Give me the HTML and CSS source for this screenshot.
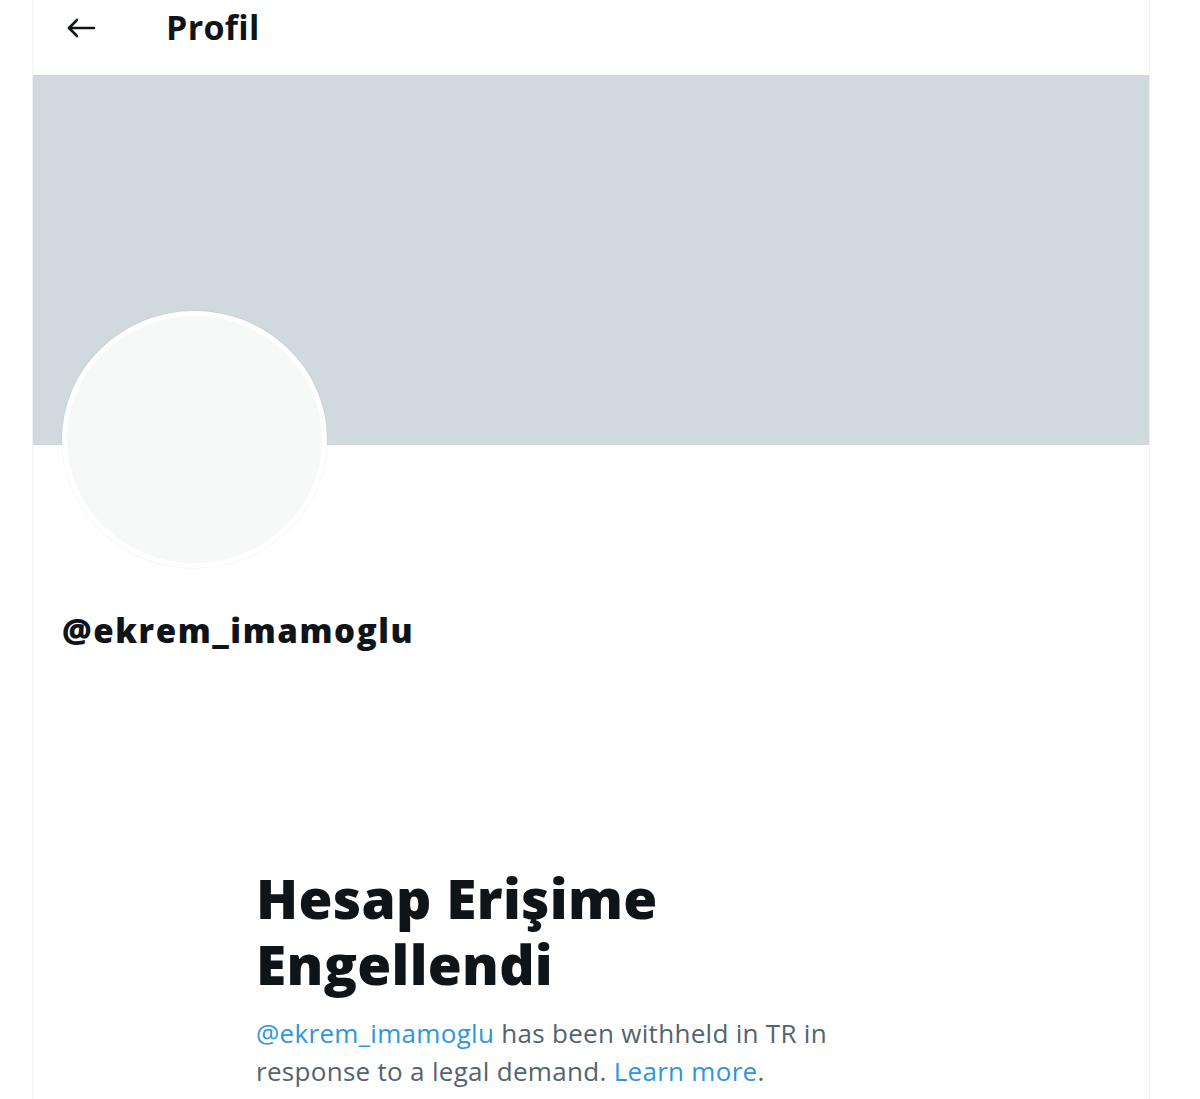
FILE: index.html
```
<!DOCTYPE html>
<html lang="tr">
<head>
    <meta charset="UTF-8">
    <meta name="viewport" content="width=device-width, initial-scale=1.0">
    <title>Profil</title>
    <link rel="stylesheet" href="styles.css">
</head>
<body>
    <div class="column">
        <header class="topbar">
            <a class="back">
                <svg width="30" height="20" viewBox="0 0 30 20">
                    <path d="M28 10H3M11 2L3 10l8 8" fill="none" stroke="#0f1419" stroke-width="2.6" stroke-linecap="round" stroke-linejoin="round"/>
                </svg>
            </a>
            <h1 class="title">Profil</h1>
        </header>
        <div class="banner"></div>
        <div class="avatar"></div>
        <div class="handle">@ekrem_imamoglu</div>
        <section class="withheld">
            <h2 class="withheld-title">Hesap Erişime Engellendi</h2>
            <p class="withheld-text"><a class="link">@ekrem_imamoglu</a> has been withheld in TR in response to a legal demand. <a class="link">Learn more</a>.</p>
        </section>
    </div>
</body>
</html>
```

FILE: styles.css
```
body {
    margin: 0;
    background: #fff;
    font-family: "Open Sans", "Noto Sans", sans-serif;
    color: #0f1419;
}
.column {
    margin-left: 32px;
    width: 1116px;
    min-height: 100vh;
    border-left: 1px solid #eff3f4;
    border-right: 1px solid #eff3f4;
}
.topbar {
    height: 75px;
    display: flex;
    align-items: center;
    padding-left: 33px;
}
.back {
    display: flex;
    width: 30px;
    height: 20px;
    margin-right: 70px;
    margin-top: -20px;
}
.title {
    margin: 0;
    font-size: 34px;
    font-weight: 700;
    line-height: 40px;
    margin-top: -22px;
    letter-spacing: 0.3px;
}
.banner {
    height: 370px;
    background: #cfd9de;
}
.avatar {
    position: relative;
    box-sizing: border-box;
    width: 265px;
    height: 257px;
    margin: -134px 0 0 29px;
    border: 5px solid #fff;
    border-radius: 50%;
    background: #f7f9f9;
    box-shadow: 0 0 0 1px rgba(0, 0, 0, .03);
}
.handle {
    margin: 43px 0 0 29px;
    font-size: 33px;
    font-weight: 800;
    line-height: 40px;
    letter-spacing: 1.6px;
}
.withheld {
    width: 620px;
    margin: 214px 0 0 223px;
}
.withheld-title {
    margin: 0;
    font-size: 55px;
    font-weight: 800;
    line-height: 66px;
    letter-spacing: 0.3px;
}
.withheld-text {
    margin: 17px 0 0;
    font-size: 26px;
    line-height: 38px;
    letter-spacing: 0.3px;
    color: #536471;
}
.link {
    color: #2f96dc;
}
```
